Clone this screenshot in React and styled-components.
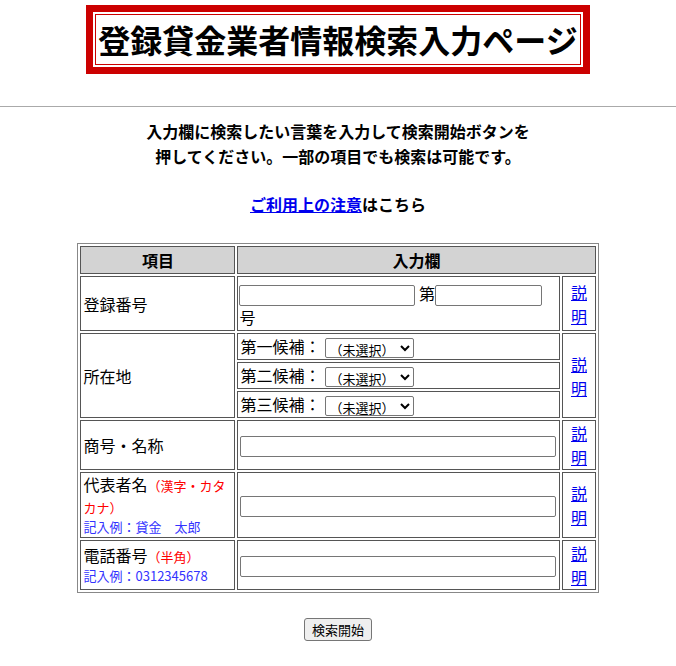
import React from "react";
import styled, { createGlobalStyle } from "styled-components";

const Global = createGlobalStyle`
  html, body { margin: 0; background: #fff; }
  body { font-family: "Noto Sans CJK JP", "Noto Sans", sans-serif; font-size: 16px; color: #000; }
`;
const TitleWrap = styled.div`display:flex; justify-content:center; padding-top:5px;`;
const TitleOuter = styled.div`background:#cc0000; padding:7px 7px;`;
const TitleGap = styled.div`background:#fff; padding:2px;`;
const TitleInner = styled.h1`
  margin:0; border:1px solid #cc0000; font-size:32px; font-weight:700; line-height:49px;
  padding:0 2px; letter-spacing:0; white-space:nowrap;
`;
const Rule = styled.hr`margin:32px 0 0; border:none; border-top:1px solid #aaa;`;
const Lead = styled.p`margin:12px 0 0; text-align:center; font-weight:700; font-size:16px; line-height:25px;`;
const NoteLine = styled.p`margin:23px 0 0; text-align:center; font-weight:700; font-size:16px; line-height:25px;
  a { color:#00e; }`;
const Table = styled.table`
  margin:26px auto 0; width:519px; table-layout:fixed; border:1px solid #888; border-spacing:2px;
  font-size:16px;
`;
const Th = styled.th`background:#d3d3d3; border:1px solid #555; height:26px; padding:0; font-weight:700; line-height:22px;`;
const Td = styled.td`border:1px solid #555; padding:${p => p.$pad || "1px 2px"}; text-align:${p => p.$center ? "center" : "left"}; vertical-align:middle; line-height:${p => p.$lh || "20px"};
  a { color:#00e; }`;
const Inner = styled.table`width:100%; border-spacing:0; border-collapse:separate;`;
const InnerTd = styled.td`border:1px solid #555; padding:0 2px; height:25px; line-height:22px;`;
const SubGap = styled.tr`height:2px;`;
const Input = styled.input`width:${p => p.$w}px; height:${p => p.$h || 21}px; box-sizing:border-box; border:1px solid #767676; border-radius:2px; padding:0 2px; font-size:13px; vertical-align:middle;`;
const Select = styled.select`font-size:13px; height:20px; width:89px; margin-left:4px; font-family:inherit; vertical-align:middle; border:1px solid #767676; border-radius:2px; background:#fff;`;
const Red = styled.span`color:#ff0000; font-size:13px;`;
const Blue = styled.div`color:#3333ff; font-size:13px; line-height:18px;`;
const Btn = styled.button`display:block; margin:25px auto 0; font-family:inherit; font-size:13px; padding:1px 7px; height:23px; border:1px solid #767676; border-radius:3px; background:#efefef;`;

const Expl = () => <Td $center $lh="24px" $pad="0"><a href="#">説<br />明</a></Td>;
const Cands = ["第一候補：", "第二候補：", "第三候補："];

export default function App() {
  return (
    <>
      <Global />
      <TitleWrap><TitleOuter><TitleGap><TitleInner>登録貸金業者情報検索入力ページ</TitleInner></TitleGap></TitleOuter></TitleWrap>
      <Rule />
      <Lead>入力欄に検索したい言葉を入力して検索開始ボタンを<br />押してください。一部の項目でも検索は可能です。</Lead>
      <NoteLine><a href="#">ご利用上の注意</a>はこちら</NoteLine>
      <Table>
        <colgroup><col style={{ width: 155 }} /><col style={{ width: 323 }} /><col style={{ width: 33 }} /></colgroup>
        <tbody>
          <tr><Th>項目</Th><Th colSpan={2}>入力欄</Th></tr>
          <tr>
            <Td>登録番号</Td>
            <Td $pad="5px 1px 2px" $lh="22px"><Input $w={176} /> 第<Input $w={107} /><br />号</Td>
            <Expl />
          </tr>
          <tr>
            <Td>所在地</Td>
            <Td $pad="0" style={{ border: "none" }}>
              <Inner><tbody>
                {Cands.map((c, i) => (
                  <React.Fragment key={c}>
                    {i > 0 && <SubGap><td /></SubGap>}
                    <tr><InnerTd>{c}<Select><option>（未選択）</option></Select></InnerTd></tr>
                  </React.Fragment>
                ))}
              </tbody></Inner>
            </Td>
            <Expl />
          </tr>
          <tr><Td>商号・名称</Td><Td><Input $w={316} /></Td><Expl /></tr>
          <tr>
            <Td>代表者名<Red>（漢字・カタカナ）</Red><Blue>記入例：貸金　太郎</Blue></Td>
            <Td><Input $w={316} /></Td><Expl />
          </tr>
          <tr>
            <Td $pad="3px 2px">電話番号<Red>（半角）</Red><Blue>記入例：0312345678</Blue></Td>
            <Td><Input $w={316} /></Td><Expl />
          </tr>
        </tbody>
      </Table>
      <Btn>検索開始</Btn>
    </>
  );
}
